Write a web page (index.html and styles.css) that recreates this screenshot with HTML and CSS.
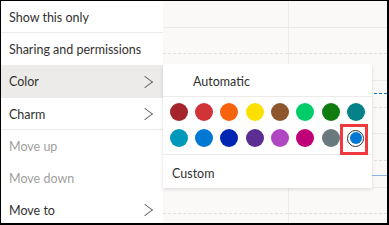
FILE: index.html
```html
<!DOCTYPE html>
<html lang="en">
<head>
    <meta charset="UTF-8">
    <meta name="viewport" content="width=device-width, initial-scale=1.0">
    <title>Calendar menu</title>
    <link rel="stylesheet" href="styles.css">
</head>
<body>

    <div class="frame">
        <!-- context menu -->
        <ul class="menu">
            <li class="item sep">Show this only</li>
            <li class="item">Sharing and permissions</li>
            <li class="item active">Color <span class="chevron"></span></li>
            <li class="item sep">Charm <span class="chevron"></span></li>
            <li class="item disabled">Move up</li>
            <li class="item disabled">Move down</li>
            <li class="item">Move to <span class="chevron"></span></li>
        </ul>

        <!-- calendar grid behind -->
        <div class="calendar">
            <div class="col first">
                <div class="slot"></div><div class="slot half"></div>
                <div class="slot"></div><div class="slot half"></div>
                <div class="slot"></div><div class="slot half"></div>
                <div class="slot"></div><div class="slot half"></div>
                <div class="slot"></div>
            </div>
            <div class="col second">
                <div class="slot"></div><div class="slot half"></div>
                <div class="slot"></div><div class="slot half"></div>
                <div class="slot"></div><div class="slot half"></div>
                <div class="slot"></div><div class="slot half"></div>
                <div class="slot"></div>
                <div class="mark dashed"></div>
                <div class="mark solid"></div>
            </div>
        </div>

        <!-- color submenu -->
        <div class="submenu">
            <div class="sub-item auto">Automatic</div>
            <div class="swatches">
                <span class="swatch" style="background:#a4262c"></span>
                <span class="swatch" style="background:#d13438"></span>
                <span class="swatch" style="background:#f7630c"></span>
                <span class="swatch" style="background:#fce100"></span>
                <span class="swatch" style="background:#8e562e"></span>
                <span class="swatch" style="background:#00cc6a"></span>
                <span class="swatch" style="background:#107c10"></span>
                <span class="swatch" style="background:#038387"></span>
                <span class="swatch" style="background:#0099bc"></span>
                <span class="swatch" style="background:#0078d4"></span>
                <span class="swatch" style="background:#0027b4"></span>
                <span class="swatch" style="background:#5c2e91"></span>
                <span class="swatch" style="background:#b146c2"></span>
                <span class="swatch" style="background:#bf0077"></span>
                <span class="swatch" style="background:#69797e"></span>
                <span class="swatch selected"><span class="dot"></span></span>
            </div>
            <div class="sub-item custom">Custom</div>
        </div>
    </div>

</body>
</html>
```

FILE: styles.css
```css
/* page */
body {
    margin: 0;
    font-family: Lato, "Open Sans", sans-serif;
    font-size: 12.5px;
    color: #323130;
}
.frame {
    position: relative;
    display: flex;
    width: 389px;
    height: 225px;
    box-sizing: border-box;
    border-style: solid;
    border-color: #000;
    border-width: 1px 2px 2px 1px;
    background: #faf9f8;
    overflow: hidden;
}

/* left menu */
.menu {
    list-style: none;
    margin: 0;
    padding: 0;
    width: 162px;
    flex-shrink: 0;
    background: #fff;
}
.item {
    position: relative;
    height: 32px;
    line-height: 33px;
    padding-left: 8px;
    box-sizing: border-box;
    white-space: nowrap;
}
.item.sep {
    border-bottom: 1px solid #edebe9;
}
.item.active {
    background: #edebe9;
    height: 33px;
}
.item.disabled {
    color: #a19f9d;
}
.chevron {
    position: absolute;
    right: 13px;
    top: 50%;
    width: 9px;
    height: 9px;
    margin-top: -5px;
    border-top: 1px solid #605e5c;
    border-right: 1px solid #605e5c;
    transform: rotate(45deg) skew(-8deg, -8deg);
}

/* calendar behind */
.calendar {
    display: flex;
    flex: 1;
}
.col {
    position: relative;
}
.col.first {
    width: 125px;
    border-right: 1px solid #edebe9;
}
.col.second {
    flex: 1;
}
.slot {
    height: 25.67px;
    border-bottom: 1px solid #edebe9;
}
.slot.half {
    border-bottom: 1px dashed #e1dfdd;
}
.mark {
    position: absolute;
    left: 0;
    right: 0;
    height: 0;
}
.mark.dashed {
    top: 92px;
    border-top: 1px dashed #0078d4;
}
.mark.solid {
    top: 174px;
    border-top: 1px solid #8ab8e6;
}

/* color flyout */
.submenu {
    position: absolute;
    left: 162px;
    top: 63px;
    width: 209px;
    background: #fff;
    box-shadow: 0 1.6px 3.6px rgba(0, 0, 0, .13), 0 0.3px 0.9px rgba(0, 0, 0, .11);
}
.sub-item {
    height: 32px;
    line-height: 32px;
}
.sub-item.auto {
    padding-left: 30px;
    line-height: 36px;
    border-bottom: 1px solid #edebe9;
}
.sub-item.custom {
    padding-left: 9px;
    height: 33px;
    line-height: 38px;
}
.swatches {
    display: grid;
    grid-template-columns: repeat(8, 25.33px);
    grid-auto-rows: 26px;
    padding: 2px 0 3px 3px;
    border-bottom: 1px solid #edebe9;
}
.swatch {
    width: 18px;
    height: 18px;
    border-radius: 50%;
    justify-self: center;
    align-self: center;
}
.swatch.selected {
    position: relative;
    width: 17px;
    height: 17px;
    box-sizing: border-box;
    border: 1px solid #323130;
    display: flex;
    align-items: center;
    justify-content: center;
}
.swatch.selected::after {
    content: "";
    position: absolute;
    left: -8px;
    top: -7px;
    width: 28px;
    height: 31px;
    box-sizing: border-box;
    border: 3px solid #ee3a3f;
}
.dot {
    width: 12px;
    height: 12px;
    border-radius: 50%;
    background: #0078d4;
}
```
